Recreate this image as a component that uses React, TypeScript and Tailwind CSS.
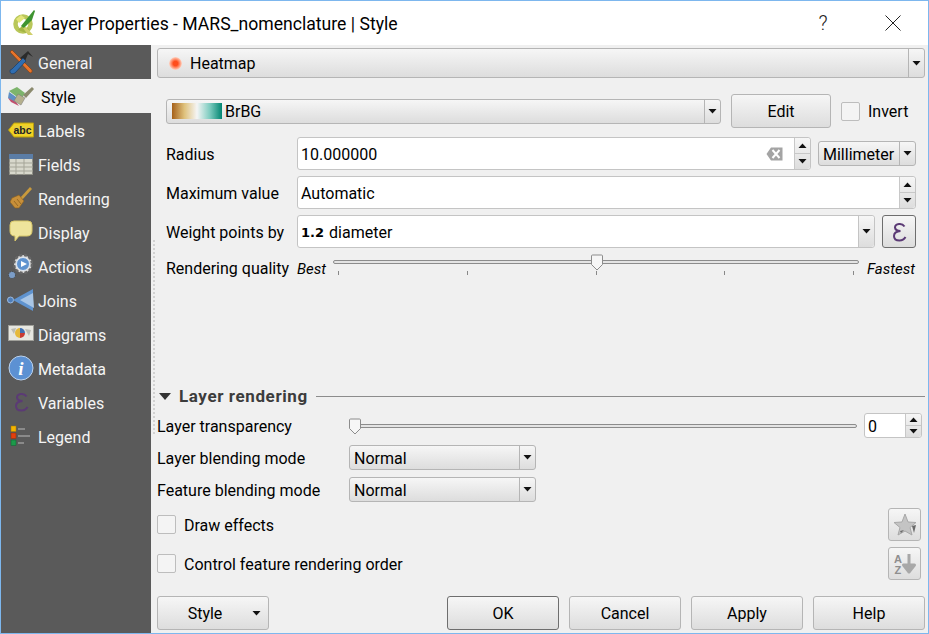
import React from "react";

const T = ({ children, className = "" }: { children: React.ReactNode; className?: string }) => (
  <span className={`pt-[2px] whitespace-nowrap ${className}`}>{children}</span>
);

const Arrow = ({ up = false, className = "" }: { up?: boolean; className?: string }) => (
  <svg width="9" height="5" viewBox="0 0 9 5" className={className}>
    <path d={up ? "M0.5 5 L4.5 0.5 L8.5 5 Z" : "M0.5 0 L8.5 0 L4.5 4.5 Z"} fill="#111" />
  </svg>
);

const QgisLogo = () => (
  <svg width="24" height="28" viewBox="0 0 24 28">
    <circle cx="11" cy="15" r="7.5" fill="none" stroke="#b9c75a" strokeWidth="4.5" />
    <path d="M4 10 L9 6 L13 9 L7 14 Z" fill="#e4e57a" />
    <path d="M6 21 L14 24 L17 20 L10 17 Z" fill="#a3b544" />
    <path d="M9 17 L22 1 L23 2 L20 11 L12 19 Z" fill="#3f9431" />
    <path d="M14 18 L21 26 L16 26 L11 19 Z" fill="#cfcf6a" />
  </svg>
);

const epsilon = "M14.5 4.5 Q12.5 1.5 9 2 Q5 2.5 5 5.5 Q5.5 9 10.5 9 Q4 9.5 4 14 Q4 18.5 9.5 18.5 Q13.5 18.5 15.5 15";

const icons: Record<string, React.ReactNode> = {
  General: (
    <svg width="26" height="26" viewBox="0 0 26 26">
      <path d="M2 3 L4 1 L24 21 Q25 24 22 24 Z" fill="#e8742a" stroke="#7a3a10" strokeWidth="0.6" />
      <path d="M12 9 L20 2 L25 8 L20 5 L17 12 Z" fill="#2b2b2b" />
      <path d="M15 9 L18 12 L7 24 Q3 26 2 23 Q1 21 4 20 Z" fill="#2f6db0" stroke="#16365c" strokeWidth="0.6" />
    </svg>
  ),
  Style: (
    <svg width="28" height="24" viewBox="0 0 28 24">
      <path d="M2 7 L10 3 L18 9 L14 16 Z" fill="#7db46c" />
      <path d="M2 8 L12 15 L8 19 L1 14 Z" fill="#5f8fc4" />
      <path d="M1 14 L9 18 L12 22 L4 18 Z" fill="#c2506e" />
      <path d="M11 10 L18 14 L14 21 L7 17 Z" fill="#b5b08e" stroke="#777" strokeWidth="0.5" />
      <path d="M16 11 L25 3 L27 5 L19 14 Z" fill="#8b8a6e" />
    </svg>
  ),
  Labels: (
    <svg width="26" height="16" viewBox="0 0 26 16">
      <path d="M0.5 8 L6 1 H25.5 V15 H6 Z" fill="#f2d21e" stroke="#b59c14" />
      <rect x="5.5" y="3.5" width="18" height="9" fill="#e9cf3a" />
      <text x="5.5" y="11.5" fontFamily="'Liberation Sans',sans-serif" fontSize="10.5" fontWeight="700" fill="#222">abc</text>
    </svg>
  ),
  Fields: (
    <svg width="24" height="21" viewBox="0 0 24 21">
      <rect x="0.5" y="0.5" width="23" height="20" fill="#d8d8cc" stroke="#8f8f86" />
      <rect x="0" y="0" width="24" height="5" fill="#5b7da6" />
      <path d="M0 9 H24 M0 13 H24 M0 17 H24 M7 5 V21 M15 5 V21" stroke="#a5a598" strokeWidth="1" />
    </svg>
  ),
  Rendering: (
    <svg width="24" height="24" viewBox="0 0 24 24">
      <path d="M11 12 L21 1 L23 3 L13 14 Z" fill="#c99a3c" />
      <path d="M3 12 L10 9 L15 15 L10 22 L6 22 L1 16 Z" fill="#c78f3a" stroke="#8a5f1d" strokeWidth="0.6" />
      <path d="M5 15 L9 20 M8 13 L12 18" stroke="#8a5f1d" strokeWidth="0.8" />
    </svg>
  ),
  Display: (
    <svg width="24" height="24" viewBox="0 0 24 24">
      <path d="M5 1 H19 Q23 1 23 5 V11 Q23 16 18 16 H10 L6 21 L6 16 Q1 16 1 11 V5 Q1 1 5 1 Z" fill="#efe49c" stroke="#d7c668" />
    </svg>
  ),
  Actions: (
    <svg width="28" height="28" viewBox="0 0 28 28">
      <circle cx="16" cy="12" r="9" fill="#ddd" stroke="#666" strokeWidth="2.5" strokeDasharray="3 1.8" />
      <circle cx="16" cy="12" r="6.5" fill="#5f93cf" stroke="#dfe8f2" />
      <path d="M14 9 L20 12 L14 15 Z" fill="#fff" />
      <circle cx="5" cy="23" r="3.5" fill="#7b9dc7" stroke="#444" strokeDasharray="1.5 0.8" />
    </svg>
  ),
  Joins: (
    <svg width="28" height="24" viewBox="0 0 28 24">
      <circle cx="3.5" cy="12" r="3" fill="#4f7fba" stroke="#9dbbe0" />
      <path d="M6 12 L26 1 L26 23 Z" fill="#5f93cf" />
      <path d="M13 12 L26 5 L27 20 Z" fill="#a9c6e6" />
    </svg>
  ),
  Diagrams: (
    <svg width="26" height="18" viewBox="0 0 26 18">
      <rect x="0.5" y="0.5" width="25" height="15" fill="#e6e6e0" stroke="#a0a09a" />
      <path d="M3 4 L8 3 L6 9 Z M17 4 L23 5 L21 11 Z" fill="#bcbcb4" />
      <path d="M12 8 L12 3 A5 5 0 0 1 17 8 Z" fill="#3f6fb3" />
      <path d="M12 8 L17 8 A5 5 0 0 1 12 13 Z" fill="#c83a32" />
      <path d="M12 8 L12 13 A5 5 0 0 1 7 8 A5 5 0 0 1 12 3 Z" fill="#e5b93c" />
    </svg>
  ),
  Metadata: (
    <svg width="26" height="26" viewBox="0 0 26 26">
      <circle cx="13" cy="13" r="12" fill="#5c91d3" stroke="#bcd2ec" />
      <text x="13" y="20" textAnchor="middle" fontFamily="'Liberation Serif',serif" fontStyle="italic" fontWeight="700" fontSize="19" fill="#fff">i</text>
    </svg>
  ),
  Variables: (
    <svg width="18" height="20" viewBox="0 0 18 20">
      <path d={epsilon} fill="none" stroke="#5b3a75" strokeWidth="2" />
    </svg>
  ),
  Legend: (
    <svg width="22" height="22" viewBox="0 0 22 22">
      <rect x="1" y="1" width="5" height="5.5" fill="#f4b400" stroke="#a87a00" strokeWidth="0.5" />
      <rect x="1" y="8" width="5" height="5.5" fill="#e2400e" stroke="#922a08" strokeWidth="0.5" />
      <rect x="1" y="15" width="5" height="5.5" fill="#1c9a4a" stroke="#106030" strokeWidth="0.5" />
      <path d="M8 4 H15 M8 11 H20 M8 18 H14" stroke="#9a9a9a" strokeWidth="1.5" />
    </svg>
  ),
};

const navItems = ["General", "Style", "Labels", "Fields", "Rendering", "Display", "Actions", "Joins", "Diagrams", "Metadata", "Variables", "Legend"];

const Nav = () => (
  <div className="w-[150px] shrink-0 bg-[#5a5a5a] flex flex-col">
    {navItems.map((n) => {
      const active = n === "Style";
      return (
        <div key={n} className={`h-[34px] flex items-center ${active ? "bg-[#f0f0f0] text-black" : "text-[#f4f4f4]"}`}>
          <div className="w-[37px] shrink-0 flex justify-center items-center pl-[2px]">{icons[n]}</div>
          <span className={active ? "pl-[3px] pt-[4px]" : "pt-[4px]"}>{n}</span>
        </div>
      );
    })}
  </div>
);

const Combo = ({ children, className = "" }: { children: React.ReactNode; className?: string }) => (
  <div className={`flex items-stretch border border-[#b5b5b5] rounded-[3px] bg-linear-to-b from-[#f6f6f6] to-[#dddddd] ${className}`}>
    <div className="flex-1 min-w-0 flex items-center">{children}</div>
    <div className="w-[16px] shrink-0 border-l border-[#b5b5b5] flex items-center justify-center">
      <Arrow />
    </div>
  </div>
);

const Spin = () => (
  <div className="w-[16px] shrink-0 border-l border-[#c8c8c8] flex flex-col bg-linear-to-b from-[#f6f6f6] to-[#dddddd] rounded-r-[3px]">
    <div className="flex-1 flex items-center justify-center border-b border-[#c8c8c8]">
      <Arrow up />
    </div>
    <div className="flex-1 flex items-center justify-center">
      <Arrow />
    </div>
  </div>
);

const Button = ({ children, className = "", strong = false }: { children: React.ReactNode; className?: string; strong?: boolean }) => (
  <div className={`flex items-center justify-center rounded-[3px] border ${strong ? "border-[#6e6e6e]" : "border-[#b5b5b5]"} bg-linear-to-b from-[#f6f6f6] to-[#dddddd] ${className}`}>
    {children}
  </div>
);

const Check = () => <div className="w-[19px] h-[19px] shrink-0 border border-[#bdbdbd] rounded-[2px] bg-[#f4f4f4]" />;

const Handle = () => (
  <svg width="12" height="17" viewBox="0 0 12 17">
    <path d="M1.5 1 H10.5 Q11.5 1 11.5 2 V10.5 L6 16 L0.5 10.5 V2 Q0.5 1 1.5 1 Z" fill="#f6f6f6" stroke="#8c8c8c" />
  </svg>
);

const Groove = ({ children }: { children?: React.ReactNode }) => (
  <div className="relative h-[4px] border border-[#8c8c8c] rounded-[2px] bg-[#e4e4e4]">{children}</div>
);

export default function App() {
  return (
    <div className="w-[929px] h-[634px] flex flex-col border border-[#7db7ee] bg-white overflow-hidden text-[16px] leading-[20px] text-black font-['Roboto',sans-serif]">
      {/* Title bar */}
      <div className="h-[44px] shrink-0 flex items-center bg-white">
        <div className="w-[40px] pl-[11px] shrink-0 flex items-center">
          <QgisLogo />
        </div>
        <T className="text-[17.6px] flex-1">Layer Properties - MARS_nomenclature | Style</T>
        <span className="w-[24px] text-center text-[20px] text-[#222] font-light">?</span>
        <div className="ml-[50px] mr-[27px] flex justify-center">
          <svg width="16" height="16" viewBox="0 0 16 16">
            <path d="M0.5 0.5 L15.5 15.5 M15.5 0.5 L0.5 15.5" stroke="#222" strokeWidth="1" />
          </svg>
        </div>
      </div>

      <div className="flex-1 flex min-h-0 bg-[#f0f0f0]">
        <Nav />
        <div className="w-[6px] shrink-0 flex items-stretch pl-[2px]">
          <div className="w-[2px] mt-[195px] mb-[199px] border-l-2 border-dotted border-[#d2d2d2]" />
        </div>

        <div className="flex-1 min-w-0 flex flex-col pt-[3px] pr-[3px]">
          <Combo className="h-[30px]">
            <span className="ml-[11px] w-[13px] h-[13px] rounded-full bg-[radial-gradient(closest-side,#ff4d1c_35%,#ffd5c4_100%)]" />
            <T className="ml-[8px]">Heatmap</T>
          </Combo>

          <div className="px-[9px]">
            <div className="mt-[16px] h-[34px] flex items-center">
              <Combo className="w-[555px] h-[25px]">
                <span className="ml-[5px] w-[50px] h-[16px] bg-[linear-gradient(to_right,#a6611a,#dfc27d,#f5f5f5,#80cdc1,#018571)]" />
                <T className="ml-[3px]">BrBG</T>
              </Combo>
              <Button className="ml-[10px] w-[100px] h-[34px]"><T>Edit</T></Button>
              <div className="ml-[10px]"><Check /></div>
              <T className="ml-[8px]">Invert</T>
            </div>

            <div className="mt-[9px] h-[33px] flex items-center">
              <T className="w-[131px] shrink-0">Radius</T>
              <div className="w-[514px] h-[33px] flex border border-[#c4c4c4] rounded-[3px] bg-white">
                <div className="flex-1 flex items-center pl-[3px]">
                  <T className="flex-1">10.000000</T>
                  <svg width="17" height="14" viewBox="0 0 17 14" className="mr-[11px]">
                    <path d="M0.5 7 L5 0.5 H16.5 V13.5 H5 Z" fill="#a4a4a4" />
                    <path d="M6.5 3 L13.5 11 M13.5 3 L6.5 11" stroke="#fff" strokeWidth="2" />
                  </svg>
                </div>
                <Spin />
              </div>
              <Combo className="ml-[7px] w-[98px] h-[25px]">
                <T className="ml-[4px]">Millimeter</T>
              </Combo>
            </div>

            <div className="mt-[6px] h-[33px] flex items-center">
              <T className="w-[131px] shrink-0">Maximum value</T>
              <div className="flex-1 h-[33px] flex border border-[#c4c4c4] rounded-[3px] bg-white">
                <div className="flex-1 flex items-center pl-[3px]"><T>Automatic</T></div>
                <Spin />
              </div>
            </div>

            <div className="mt-[6px] h-[33px] flex items-center">
              <T className="w-[131px] shrink-0">Weight points by</T>
              <div className="w-[578px] h-[33px] flex border border-[#c4c4c4] rounded-[3px] bg-white">
                <div className="flex-1 flex items-center pl-[3px]">
                  <T className="font-['DejaVu_Sans',sans-serif] font-bold text-[13px] mr-[5px]">1.2</T><T>diameter</T>
                </div>
                <div className="w-[16px] border-l border-[#c4c4c4] flex items-center justify-center bg-linear-to-b from-[#f6f6f6] to-[#dddddd] rounded-r-[3px]">
                  <Arrow />
                </div>
              </div>
              <Button className="ml-[7px] w-[34px] h-[33px]" strong>
                <svg width="18" height="20" viewBox="0 0 18 20">
                  <path d={epsilon} fill="none" stroke="#5b3a75" strokeWidth="2" />
                </svg>
              </Button>
            </div>

            <div className="mt-[2px] h-[30px] flex">
              <div className="w-[131px] shrink-0 mt-[9px] whitespace-nowrap">Rendering quality</div>
              <span className="mt-[9px] italic text-[15px] w-[36px] shrink-0">Best</span>
              <div className="w-[526px] shrink-0 pt-[10px]">
                <Groove>
                  <div className="absolute left-[257px] -top-[7px]"><Handle /></div>
                </Groove>
                <div className="mt-[7px] flex justify-between px-[5px]">
                  {[0, 1, 2, 3, 4].map((i) => (
                    <div key={i} className="w-px h-[4px] bg-[#888]" />
                  ))}
                </div>
              </div>
              <span className="mt-[9px] ml-[8px] italic text-[15px]">Fastest</span>
            </div>
          </div>

          {/* Layer rendering */}
          <div className="mt-[108px] h-[16px] flex items-center">
            <svg width="12" height="7" viewBox="0 0 12 7" className="ml-[2px]">
              <path d="M0 0 H12 L6 7 Z" fill="#333" />
            </svg>
            <span className="ml-[8px] whitespace-nowrap font-bold text-[17px] tracking-[0.6px] text-[#3c3c3c]">Layer rendering</span>
            <div className="ml-[8px] flex-1 h-px bg-[#8c8c8c]" />
          </div>

          <div className="mt-[9px] h-[25px] flex items-center">
            <T className="w-[192px] shrink-0">Layer transparency</T>
            <div className="w-[508px] shrink-0">
              <Groove>
                <div className="absolute -left-px -top-[7px]"><Handle /></div>
              </Groove>
            </div>
            <div className="ml-[7px] w-[58px] h-[25px] flex border border-[#c4c4c4] rounded-[3px] bg-white">
              <div className="flex-1 flex items-center pl-[3px]"><T>0</T></div>
              <Spin />
            </div>
          </div>

          <div className="mt-[7px] h-[25px] flex items-center">
            <T className="w-[192px] shrink-0">Layer blending mode</T>
            <Combo className="w-[187px] h-[25px]"><T className="ml-[4px]">Normal</T></Combo>
          </div>
          <div className="mt-[7px] h-[25px] flex items-center">
            <T className="w-[192px] shrink-0">Feature blending mode</T>
            <Combo className="w-[187px] h-[25px]"><T className="ml-[4px]">Normal</T></Combo>
          </div>

          <div className="mt-[6px] h-[33px] flex items-center pr-[4px]">
            <Check />
            <T className="ml-[8px] flex-1">Draw effects</T>
            <Button className="w-[33px] h-[33px]">
              <svg width="24" height="24" viewBox="0 0 24 24">
                <path d="M12 1 L15 9 L23 9.5 L17 14.5 L19 22 L12 18 L5 22 L7 14.5 L1 9.5 L9 9 Z" fill="#c4c4c4" stroke="#a8a8a8" />
                <path d="M19 13 L23 12 L21 20 Z M7 18 L11 17 L8 20 Z" fill="#6a6a6a" />
              </svg>
            </Button>
          </div>
          <div className="mt-[6px] h-[33px] flex items-center pr-[4px]">
            <Check />
            <T className="ml-[8px] flex-1">Control feature rendering order</T>
            <Button className="w-[33px] h-[33px]">
              <svg width="24" height="24" viewBox="0 0 24 24">
                <text x="1" y="11" fontFamily="'Liberation Sans',sans-serif" fontWeight="700" fontSize="11" fill="#8e8e8e">A</text>
                <text x="1.5" y="22" fontFamily="'Liberation Sans',sans-serif" fontWeight="700" fontSize="11" fill="#8e8e8e">Z</text>
                <path d="M16 2 V15 M10.5 13 H21.5 L16 20 Z" fill="#a8a8a8" stroke="#a8a8a8" strokeWidth="3" strokeLinejoin="round" />
              </svg>
            </Button>
          </div>

          <div className="mt-[16px] h-[34px] flex items-center gap-[10px]">
            <Button className="w-[112px] h-[34px] mr-[168px]">
              <T className="ml-[23px] mr-[30px]">Style</T>
              <Arrow />
            </Button>
            <Button className="w-[112px] h-[34px]" strong><T>OK</T></Button>
            <Button className="w-[112px] h-[34px]"><T>Cancel</T></Button>
            <Button className="w-[112px] h-[34px]"><T>Apply</T></Button>
            <Button className="w-[112px] h-[34px]"><T>Help</T></Button>
          </div>
        </div>
      </div>
    </div>
  );
}
